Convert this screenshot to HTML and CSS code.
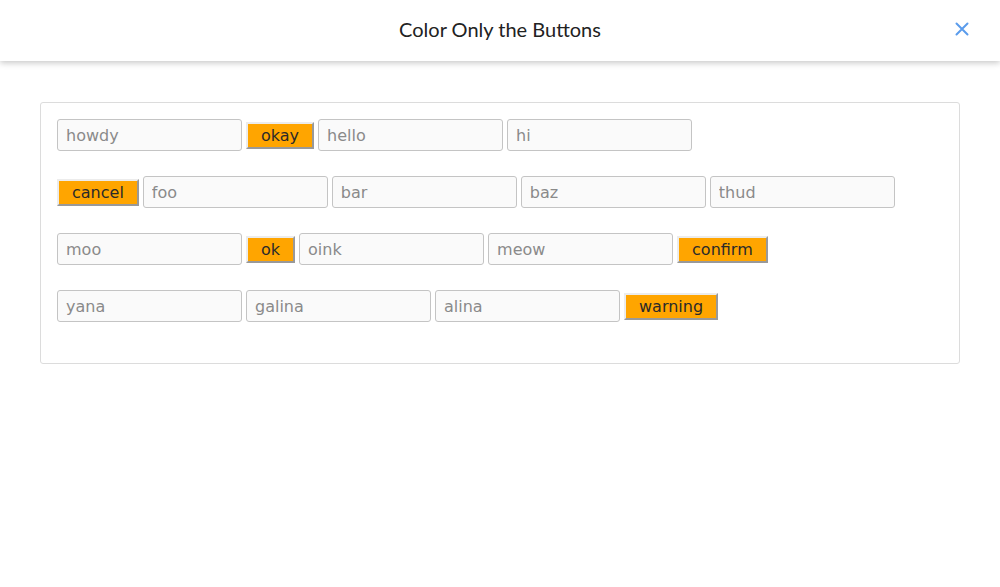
FILE: index.html
```html
<!DOCTYPE html>
<html>
<head>
<meta charset="utf-8">
<link rel="stylesheet" href="styles.css">
</head>
<body>
<header class="topbar">
  <h1 class="title">Color Only the Buttons</h1>
  <button class="close" aria-label="close">
    <svg width="16" height="16" viewBox="0 0 16 16"><path d="M2.5 2.5 L13.5 13.5 M13.5 2.5 L2.5 13.5" stroke="#5b9cec" stroke-width="2" stroke-linecap="round"/></svg>
  </button>
</header>
<main class="content">
  <div class="card">
    <div class="row">
      <input class="field" placeholder="howdy">
      <button class="btn">okay</button>
      <input class="field" placeholder="hello">
      <input class="field" placeholder="hi">
    </div>
    <div class="row">
      <button class="btn">cancel</button>
      <input class="field" placeholder="foo">
      <input class="field" placeholder="bar">
      <input class="field" placeholder="baz">
      <input class="field" placeholder="thud">
    </div>
    <div class="row">
      <input class="field" placeholder="moo">
      <button class="btn">ok</button>
      <input class="field" placeholder="oink">
      <input class="field" placeholder="meow">
      <button class="btn">confirm</button>
    </div>
    <div class="row">
      <input class="field" placeholder="yana">
      <input class="field" placeholder="galina">
      <input class="field" placeholder="alina">
      <button class="btn">warning</button>
    </div>
  </div>
</main>
</body>
</html>
```
FILE: styles.css
```css
* { box-sizing: border-box; }
html, body { margin: 0; padding: 0; background: #fff; }
body { font-family: "DejaVu Sans", sans-serif; }

.topbar {
  position: relative;
  height: 61px;
  padding-bottom: 3px;
  display: flex;
  align-items: center;
  justify-content: center;
  background: #fff;
  box-shadow: 0 2px 6px rgba(0,0,0,0.22);
}
.title {
  margin: 0;
  font-family: Lato, "Open Sans", sans-serif;
  font-weight: 400;
  font-size: 20px;
  color: #222;
}
.close {
  position: absolute;
  right: 30px;
  top: 21px;
  border: 0;
  background: none;
  padding: 0;
  width: 16px;
  height: 16px;
  display: flex;
}

.content { padding: 41px 40px 0; }
.card {
  border: 1px solid #dcdcdc;
  border-radius: 3px;
  padding: 16px 16px 16px;
}
.row {
  display: flex;
  align-items: center;
  gap: 4px;
  margin-bottom: 25px;
}
.field {
  width: 185px;
  height: 32px;
  border: 1px solid #c4c4c4;
  border-radius: 3px;
  background: #fafafa;
  padding: 0 8px;
  font-family: "DejaVu Sans", sans-serif;
  font-size: 16px;
  color: #333;
  margin: 0;
}
.field::placeholder { color: #8a8a8a; }
.btn {
  margin: 0;
  height: 27px;
  padding: 1px 13px 0;
  background: #ffa500;
  color: #2a2a2a;
  font-family: "DejaVu Sans", sans-serif;
  font-size: 16px;
  line-height: 19px;
  border-style: solid;
  border-width: 2px;
  border-color: #ececec #999 #999 #ececec;
}
```
